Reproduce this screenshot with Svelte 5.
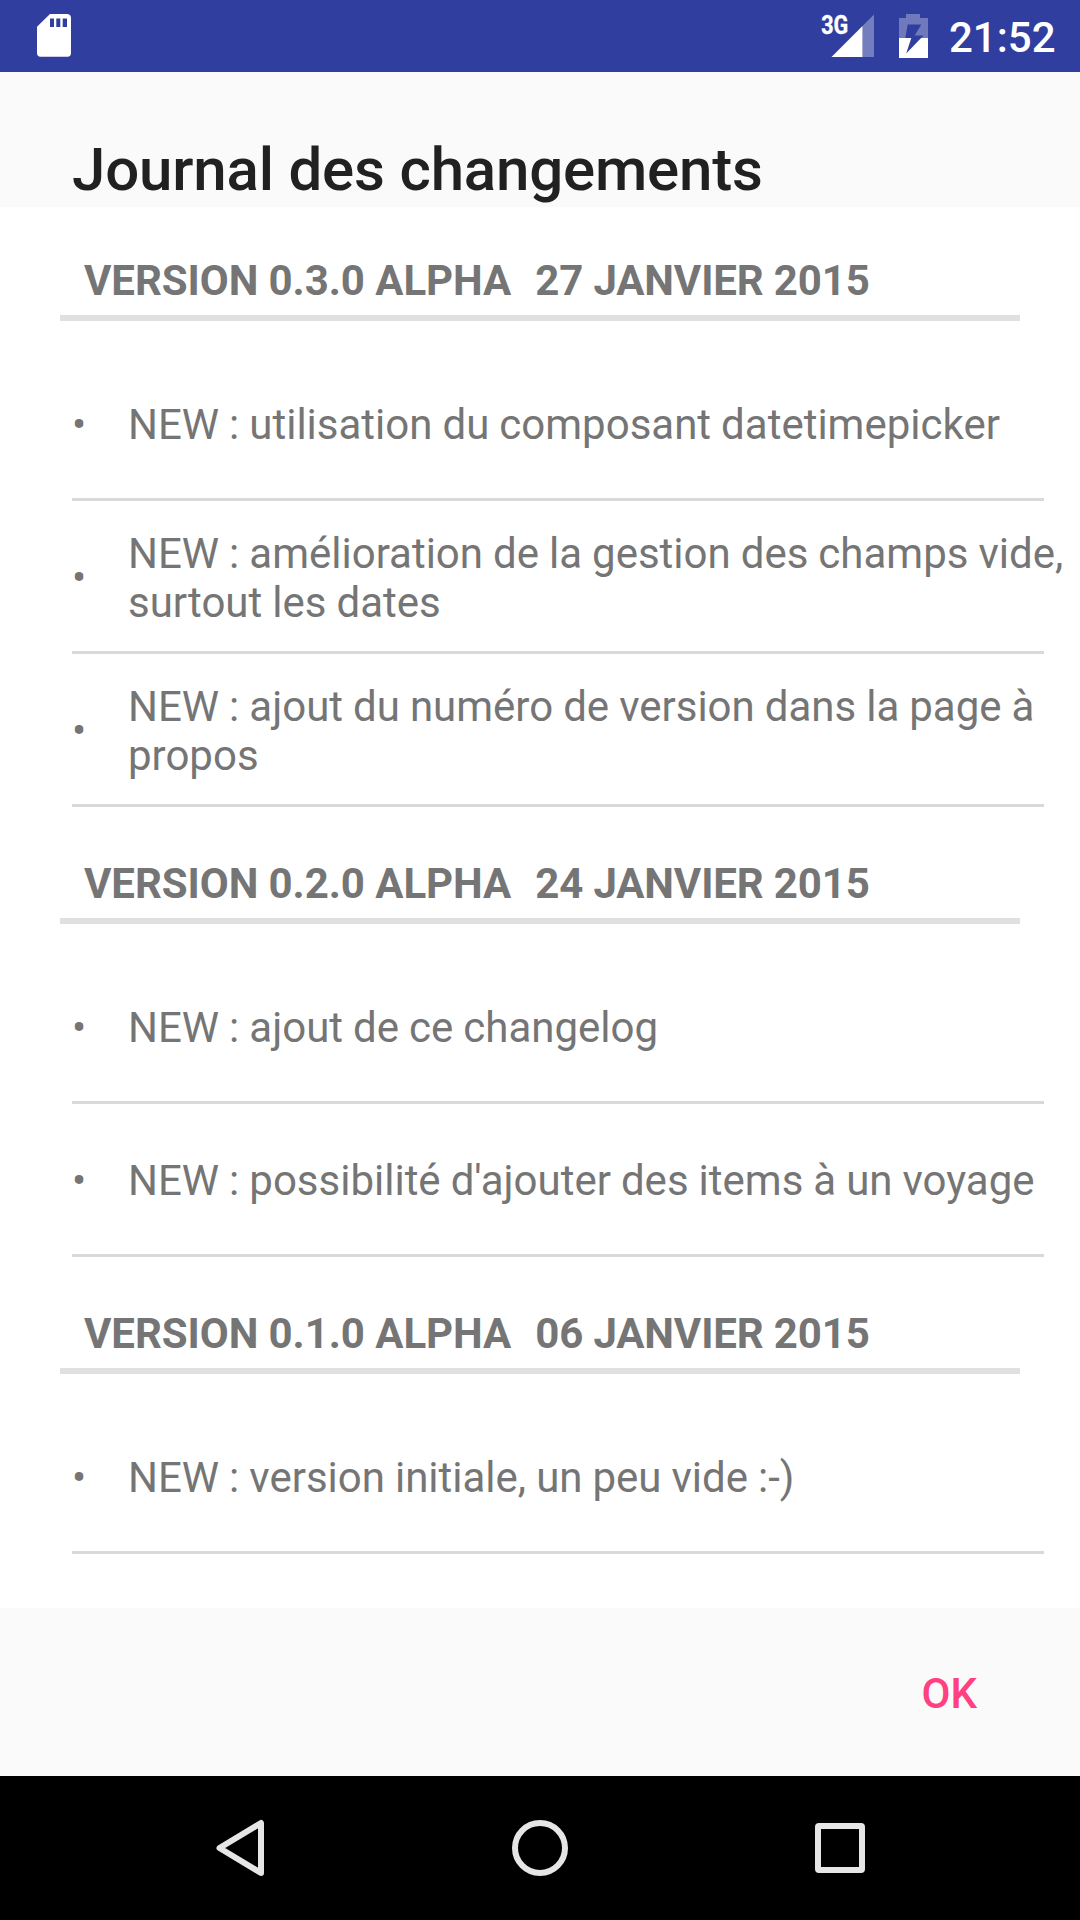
<script>
  const versions = [
    {
      name: 'VERSION 0.3.0 ALPHA',
      date: '27 JANVIER 2015',
      changes: [
        'NEW : utilisation du composant datetimepicker',
        'NEW : amélioration de la gestion des champs vide, surtout les dates',
        'NEW : ajout du numéro de version dans la page à propos',
      ],
    },
    {
      name: 'VERSION 0.2.0 ALPHA',
      date: '24 JANVIER 2015',
      changes: ['NEW : ajout de ce changelog', "NEW : possibilité d'ajouter des items à un voyage"],
    },
    {
      name: 'VERSION 0.1.0 ALPHA',
      date: '06 JANVIER 2015',
      changes: ['NEW : version initiale, un peu vide :-)'],
    },
  ];
</script>

<div class="screen">
  <header class="status">
    <svg class="sd" width="34" height="43" viewBox="37 14.5 34 43">
      <path fill="#fff" fill-rule="evenodd" d="M50 14.5H67.5Q71 15 71 18.500V53.500Q71 57 67.500 57.300H40.500Q37 57 37 53.500V27.200ZM50 19V27.500H54V19ZM56.300 19V27.500H60.300V19ZM62.700 19V27.500H67V19Z" />
    </svg>
    <div class="right">
      <svg class="signal" width="56" height="54" viewBox="818 4 56 54">
        <path fill="#fff" fill-opacity=".33" d="M874 14.500V57H862.500V26Z" />
        <path fill="#fff" d="M862.500 26V57H831.500Z" />
        <text x="821.200" y="33.500" textLength="27" lengthAdjust="spacingAndGlyphs">3G</text>
      </svg>
      <svg class="battery" width="29" height="44" viewBox="899 14 29 44">
        <path fill="#7079bb" d="M906 14H920V18H928V38H899V18H906Z" />
        <path fill="#fff" d="M899 38H928V58H899Z" />
        <path fill="#303f9f" d="M907.700 24.500H921.300L914.700 35.500H923.500L906.200 53.500L911.300 38H905.300Z" />
      </svg>
      <span class="clock">21:52</span>
    </div>
  </header>

  <h1>Journal des changements</h1>

  <main>
    {#each versions as version}
      <section>
        <h2><span class="name">{version.name}</span><span class="date">{version.date}</span></h2>
        <ul>
          {#each version.changes as change}
            <li><span class="bullet">•</span><p>{change}</p></li>
          {/each}
        </ul>
      </section>
    {/each}
  </main>

  <footer><button>OK</button></footer>

  <nav>
    <svg width="60" height="60" viewBox="0 0 60 60"><path d="M51 5V55L9.500 30Z" /></svg>
    <svg width="60" height="60" viewBox="0 0 60 60"><circle cx="30" cy="30" r="25" /></svg>
    <svg width="60" height="60" viewBox="0 0 60 60"><rect x="8" y="8" width="44" height="44" rx="1" /></svg>
  </nav>
</div>

<style>
  :global(body) {
    background: #fff;
  }
  .screen {
    width: 1080px;
    height: 1920px;
    display: flex;
    flex-direction: column;
    overflow: hidden;
    background: #fff;
    font-family: Roboto, sans-serif;
    color: #757575;
  }
  svg {
    display: block;
    flex: none;
  }
  .status {
    box-sizing: border-box;
    height: 72px;
    flex: none;
    padding: 4px 24px 0 37px;
    display: flex;
    justify-content: space-between;
    align-items: flex-start;
    background: #303f9f;
    color: #fff;
  }
  .sd {
    margin-top: 10px;
  }
  .right {
    display: flex;
    align-items: flex-start;
  }
  .battery {
    margin: 10px 0 0 25px;
  }
  .signal text {
    font: 700 25.5px Roboto, sans-serif;
    fill: #fff;
    stroke: #fff;
    stroke-width: 0.4;
  }
  .clock {
    width: 107px;
    margin: 9px 0 0 21px;
    font-size: 42px;
    font-weight: 500;
    line-height: 49px;
    white-space: nowrap;
  }
  h1 {
    box-sizing: border-box;
    height: 135px;
    flex: none;
    margin: 0;
    padding: 62px 72px 0;
    background: #fafafa;
    color: #212121;
    font-size: 60px;
    font-weight: 500;
    line-height: 71px;
    letter-spacing: -0.18px;
    white-space: nowrap;
  }
  main {
    height: 1401px;
    flex: none;
  }
  h2 {
    box-sizing: border-box;
    height: 117px;
    margin: 0 60px 27px;
    padding: 52px 24px 0;
    display: flex;
    gap: 24px;
    border-bottom: 6px solid #e0e0e0;
    font-size: 42px;
    font-weight: 700;
    line-height: 49px;
    white-space: nowrap;
  }
  .name {
    letter-spacing: -0.07px;
  }
  .date {
    letter-spacing: -0.14px;
  }
  section:first-child h2 {
    height: 114px;
    padding-top: 49px;
  }
  ul {
    margin: 0;
    padding: 0;
    list-style: none;
  }
  li {
    box-sizing: border-box;
    height: 153px;
    padding: 3px 12px 3px 72px;
    display: flex;
    align-items: center;
    font-size: 42px;
    line-height: 49px;
    word-spacing: -0.4px;
    background: linear-gradient(#d9d9d9, #d9d9d9) 72px 150px / 972px 3px no-repeat;
  }
  .bullet {
    width: 56px;
    flex: none;
  }
  p {
    margin: 0;
    flex: 1;
  }
  footer {
    box-sizing: border-box;
    height: 168px;
    flex: none;
    padding-right: 103px;
    display: flex;
    justify-content: flex-end;
    align-items: center;
    background: #fafafa;
  }
  button {
    border: 0;
    padding: 2px 0 0;
    background: none;
    color: #ff4081;
    font: 500 42px/49px Roboto, sans-serif;
  }
  nav {
    height: 144px;
    flex: none;
    display: flex;
    justify-content: center;
    align-items: center;
    gap: 240px;
    background: #000;
  }
  nav svg {
    fill: none;
    stroke: #e6e6e6;
    stroke-width: 6;
    stroke-linejoin: round;
  }
</style>
